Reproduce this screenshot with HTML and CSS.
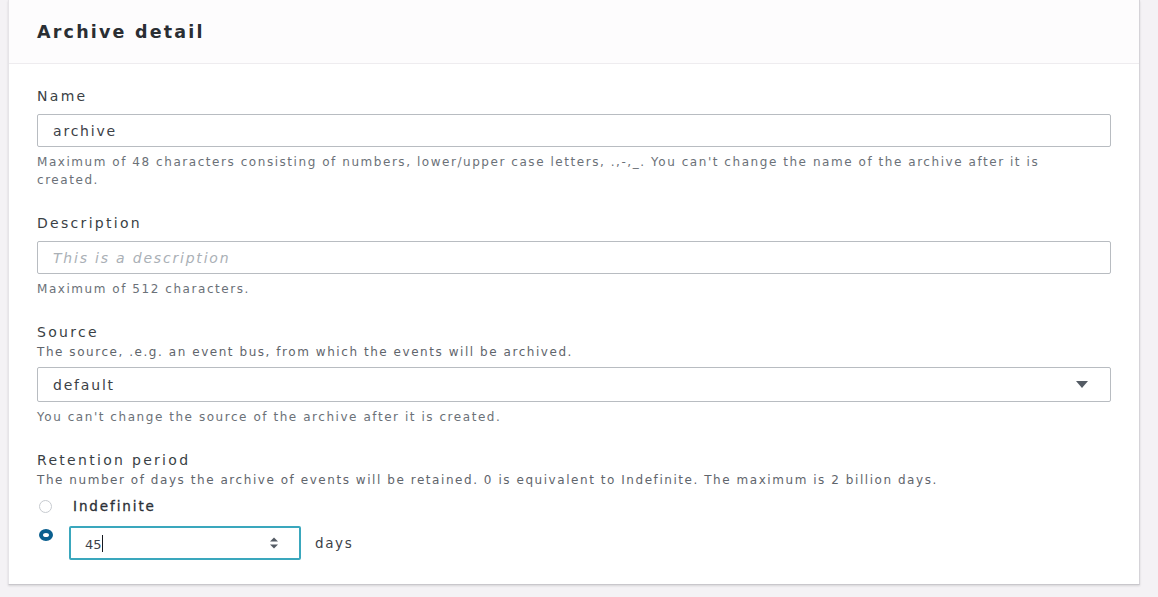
FILE: index.html
```html
<!DOCTYPE html>
<html lang="en">
<head>
    <meta charset="UTF-8">
    <title>Archive detail</title>
    <link rel="stylesheet" href="styles.css">
</head>
<body>
    <div class="card">
        <div class="card-header">
            <h2>Archive detail</h2>
        </div>
        <div class="card-body">
            <!-- Name -->
            <div class="field">
                <label class="field-label">Name</label>
                <div class="text-input">archive</div>
                <p class="hint">Maximum of 48 characters consisting of numbers, lower/upper case letters, .,-,_. You can't change the name of the archive after it is created.</p>
            </div>

            <!-- Description -->
            <div class="field">
                <label class="field-label">Description</label>
                <div class="text-input placeholder">This is a description</div>
                <p class="hint">Maximum of 512 characters.</p>
            </div>

            <!-- Source -->
            <div class="field">
                <label class="field-label">Source</label>
                <p class="desc">The source, .e.g. an event bus, from which the events will be archived.</p>
                <div class="text-input select">
                    <span>default</span>
                    <span class="caret"></span>
                </div>
                <p class="hint">You can't change the source of the archive after it is created.</p>
            </div>

            <!-- Retention period -->
            <div class="field retention">
                <label class="field-label">Retention period</label>
                <p class="desc">The number of days the archive of events will be retained. 0 is equivalent to Indefinite. The maximum is 2 billion days.</p>
                <div class="radio-row">
                    <span class="radio"></span>
                    <span class="radio-text">Indefinite</span>
                </div>
                <div class="radio-row days-row">
                    <span class="radio checked"></span>
                    <div class="number-input">
                        <span>45<span class="cursor"></span></span>
                        <svg width="10" height="14" viewBox="0 0 10 14"><path d="M1 5.5 L5 1.5 L9 5.5 Z M1 8.5 L5 12.5 L9 8.5 Z" fill="#545b64"/></svg>
                    </div>
                    <span class="unit">days</span>
                </div>
            </div>
        </div>
    </div>
</body>
</html>
```

FILE: styles.css
```css
body {
    margin: 0;
    padding: 0 18px 14px 8px;
    background: #f4f2f5;
    font-family: "DejaVu Sans", "Open Sans", sans-serif;
    color: #16191f;
}

.card {
    background: #ffffff;
    border-left: 1px solid #e6e4e8;
    border-right: 1px solid #d5d3d8;
    border-bottom: 1px solid #c9c7cc;
    box-shadow: 0 1px 2px rgba(0, 0, 0, 0.12);
}

.card-header {
    padding: 19px 28px 18px;
    border-bottom: 1px solid #eeecef;
    background: #fdfcfd;
}

.card-header h2 {
    margin: 0;
    font-size: 17.5px;
    font-weight: 700;
    line-height: 26px;
    letter-spacing: 2.2px;
    color: #2a2e33;
}

.card-body {
    padding: 22px 28px 24px;
}

.field {
    margin-bottom: 24px;
}

.field.retention {
    margin-bottom: 0;
}

.field-label {
    display: block;
    font-size: 14px;
    line-height: 20px;
    letter-spacing: 2.3px;
    color: #3a3f45;
}

.desc {
    margin: 2px 0 0;
    font-size: 12px;
    line-height: 16px;
    letter-spacing: 1.55px;
    color: #5f656c;
}

.text-input {
    margin-top: 8px;
    height: 31px;
    border: 1px solid #b8bcc1;
    border-radius: 2px;
    padding: 0 15px;
    display: flex;
    align-items: center;
    font-size: 14px;
    letter-spacing: 1.8px;
    color: #3c4147;
}

.desc + .text-input {
    margin-top: 7px;
    height: 33px;
}

.placeholder {
    font-style: italic;
    color: #aab0b6;
}

.select {
    justify-content: space-between;
    padding-right: 22px;
}

.caret {
    width: 0;
    height: 0;
    border-left: 6px solid transparent;
    border-right: 6px solid transparent;
    border-top: 7px solid #545b64;
}

.hint {
    margin: 6px 0 0;
    font-size: 12px;
    line-height: 18px;
    letter-spacing: 1.55px;
    color: #6b7178;
    padding-right: 50px;
}

.radio-row {
    display: flex;
    align-items: center;
    gap: 21px;
    margin-top: 7px;
    padding-left: 2px;
    height: 22px;
}

.radio {
    width: 13px;
    height: 13px;
    border-radius: 50%;
    border: 1px solid #c7cbd0;
    box-sizing: border-box;
    flex-shrink: 0;
}

.radio.checked {
    width: 14px;
    height: 12px;
    align-self: flex-start;
    margin-top: 3px;
    border: 4px solid #0a5f8f;
}

.radio-text {
    font-size: 13.5px;
    color: #2b3036;
    letter-spacing: 1.9px;
    -webkit-text-stroke: 0.3px #2b3036;
}

.days-row {
    height: 34px;
    margin-top: 9px;
    gap: 16px;
}

.number-input {
    box-sizing: border-box;
    width: 232px;
    height: 34px;
    border: 2px solid #3aa7bd;
    border-radius: 2px;
    display: flex;
    align-items: center;
    justify-content: space-between;
    padding: 0 20px 0 14px;
    font-size: 13px;
    color: #3c4147;
}

.cursor {
    display: inline-block;
    width: 1px;
    height: 17px;
    background: #16191f;
    vertical-align: -3px;
}

.unit {
    margin-left: -2px;
    font-size: 13.5px;
    letter-spacing: 1.6px;
    color: #3c4147;
}
```
